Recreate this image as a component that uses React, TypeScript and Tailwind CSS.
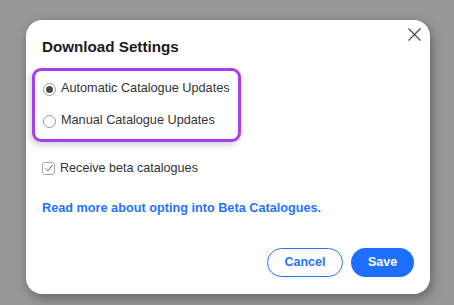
import React from "react";

function Radio({ checked }: { checked?: boolean }) {
  return (
    <span className="flex h-[13px] w-[13px] shrink-0 items-center justify-center rounded-full border border-[#9a9a9a] bg-white">
      {checked && <span className="h-[7px] w-[7px] rounded-full bg-[#4a4a4a]" />}
    </span>
  );
}

function Checkbox() {
  return (
    <span className="flex h-[13px] w-[13px] shrink-0 items-center justify-center rounded-[3px] border border-[#a8a8a8] bg-white">
      <svg width="10" height="10" viewBox="0 0 10 10" fill="none">
        <path d="M1.5 5.2 L4 7.8 L8.6 1.8" stroke="#6a6a6a" strokeWidth="1" />
      </svg>
    </span>
  );
}

export default function App() {
  return (
    <div
      className="h-[305px] w-[454px] overflow-hidden bg-[#989898] pl-[26px] pt-[20px]"
      style={{ fontFamily: '"Liberation Sans", Arial, sans-serif' }}
    >
      <div className="relative flex h-[274px] w-[404px] flex-col rounded-[16px] bg-white px-4 pt-[18px] shadow-[2px_4px_12px_rgba(0,0,0,0.35)]">
        <button className="absolute right-[9px] top-[8px] p-0">
          <svg width="13" height="13" viewBox="0 0 13 13" fill="none">
            <path d="M0.5 0.5 L12.5 12.5 M12.5 0.5 L0.5 12.5" stroke="#444" strokeWidth="1.1" />
          </svg>
        </button>

        <h2 className="text-[15.2px] font-bold leading-[18px] text-[#1b1b1b]">Download Settings</h2>

        <div className="ml-[-10px] mt-[12px] flex w-[209px] flex-col gap-3 rounded-[9px] border-[3px] border-[#a83ef2] px-2 py-2 shadow-[-2px_3px_6px_rgba(0,0,0,0.18)]">
          <label className="flex h-5 items-center gap-[5px] whitespace-nowrap text-[12.7px] text-[#333]">
            <Radio checked />
            Automatic Catalogue Updates
          </label>
          <label className="flex h-5 items-center gap-[5px] whitespace-nowrap text-[12.7px] text-[#333]">
            <Radio />
            Manual Catalogue Updates
          </label>
        </div>

        <label className="mt-[16px] flex h-5 items-center gap-[5px] whitespace-nowrap text-[12.6px] text-[#333]">
          <Checkbox />
          Receive beta catalogues
        </label>

        <a className="mt-[22px] whitespace-nowrap text-[12.7px] font-bold leading-[16px] text-[#1f74ff]">
          Read more about opting into Beta Catalogues.
        </a>

        <div className="mt-auto mb-[17px] flex justify-end gap-2">
          <button className="h-[29px] w-[76px] rounded-full border border-[#1f74ff] bg-white text-[12.5px] font-bold text-[#1f74ff]">
            Cancel
          </button>
          <button className="h-[29px] w-[63px] rounded-full bg-[#1f6fff] text-[12.5px] font-bold text-white">
            Save
          </button>
        </div>
      </div>
    </div>
  );
}
